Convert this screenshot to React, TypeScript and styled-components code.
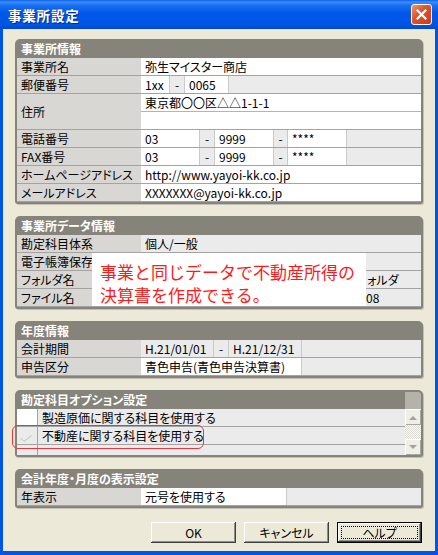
import React from "react";
import styled, { createGlobalStyle } from "styled-components";

const GlobalStyle = createGlobalStyle`
  html, body { margin: 0; padding: 0; background: #fff; }
  body { font-family: "Noto Sans CJK JP", "Liberation Sans", sans-serif; }
  #root { width: 438px; height: 555px; }
`;

const Frame = styled.div`
  width: 438px;
  height: 555px;
  box-sizing: border-box;
  display: flex;
  flex-direction: column;
  background: #0055e5;
  padding-bottom: 4px;
  font-size: 12px;
  color: #000;
`;

const TitleBar = styled.div`
  height: 29px;
  flex: none;
  display: flex;
  align-items: center;
  justify-content: space-between;
  padding: 0 6px 0 8px;
  background: linear-gradient(
    to bottom,
    #0b5fe6 0%,
    #3d8ff8 7%,
    #1a6ff2 18%,
    #0058e8 45%,
    #0055e5 85%,
    #0048cf 100%
  );
`;

const Title = styled.div`
  color: #fff;
  font-weight: bold;
  font-size: 13.5px;
  letter-spacing: 0.8px;
  text-shadow: 1px 1px 0 #0b2a8a;
`;

const CloseButton = styled.div`
  width: 21px;
  height: 21px;
  box-sizing: border-box;
  border: 1px solid #fff;
  border-radius: 3px;
  background: linear-gradient(135deg, #f0957c 0%, #e0542c 40%, #c93c14 100%);
  display: flex;
  align-items: center;
  justify-content: center;
`;

const Client = styled.div`
  flex: 1;
  margin: 0 3px;
  background: #ece9d8;
  padding: 10px 12px 0 12px;
  display: flex;
  flex-direction: column;
  gap: 12px;
  font-feature-settings: "palt";
`;

const Panel = styled.section`
  position: relative;
  background: #86837a;
  border-radius: 5px 5px 3px 3px;
  padding: 0 2px 2px 2px;
  box-shadow: 1px 1px 0 #c2bfb4;
`;

const PanelHeader = styled.div`
  height: 19px;
  line-height: 19px;
  color: #fff;
  font-weight: bold;
  padding-left: 4px;
  white-space: nowrap;
`;

const Row = styled.div<{ $h?: number }>`
  display: flex;
  height: ${(p) => p.$h ?? 18}px;
  box-sizing: border-box;
  border-bottom: 1px solid #a3a3a3;
`;

const Label = styled.div`
  width: 124px;
  flex: none;
  background: #d9d7d4;
  padding-left: 4px;
  box-sizing: border-box;
  display: flex;
  align-items: center;
  white-space: nowrap;
  overflow: hidden;
`;

const Cell = styled.div<{ $w?: number; $tone?: "white" | "gray"; $center?: boolean; $indent?: number }>`
  ${(p) => (p.$w ? `width: ${p.$w}px; flex: none;` : "flex: 1;")}
  box-sizing: border-box;
  background: ${(p) => (p.$tone === "white" ? "#fff" : "#ebebeb")};
  border-right: 1px solid #cacaca;
  padding-left: ${(p) => (p.$center ? 0 : p.$indent ?? 4)}px;
  display: flex;
  align-items: center;
  justify-content: ${(p) => (p.$center ? "center" : "flex-start")};
  white-space: nowrap;
  overflow: hidden;
  &:last-child {
    border-right: none;
  }
`;

const Stack = styled.div`
  flex: 1;
  display: flex;
  flex-direction: column;
`;

const SubLine = styled.div`
  height: 17px;
  background: #fff;
  padding-left: 4px;
  display: flex;
  align-items: center;
  & + & {
    border-top: 1px solid #b4b4b4;
  }
`;

const Callout = styled.div`
  position: absolute;
  left: 77px;
  top: 37px;
  width: 274px;
  height: 53px;
  box-sizing: border-box;
  background: #fff;
  color: #ff1a1a;
  font-size: 17px;
  line-height: 23px;
  padding: 7px 0 0 8px;
  white-space: nowrap;
  font-feature-settings: normal;
`;

const ScrollPanel = styled(Panel)`
  display: grid;
  grid-template-columns: 1fr 16px;
  grid-template-rows: 19px 46px;
`;

const OptionList = styled.div`
  background: #ebebeb;
  overflow: hidden;
`;

const OptionRow = styled.div<{ $h?: number }>`
  display: flex;
  height: ${(p) => p.$h ?? 18}px;
  box-sizing: border-box;
  border-bottom: 1px solid #a3a3a3;
`;

const CheckCell = styled.div<{ $white?: boolean }>`
  width: 21px;
  flex: none;
  box-sizing: border-box;
  border-right: 1px solid #a3a3a3;
  background: ${(p) => (p.$white ? "#fff" : "#ebebeb")};
  display: flex;
  align-items: flex-end;
  padding: 0 0 2px 3px;
`;

const OptionText = styled.div`
  flex: 1;
  padding-left: 4px;
  display: flex;
  align-items: center;
  white-space: nowrap;
`;

const Scrollbar = styled.div`
  grid-row: 1 / 3;
  grid-column: 2;
  display: flex;
  flex-direction: column;
`;

const ScrollCap = styled.div`
  height: 17px;
  margin-top: 2px;
  background: #b5b2aa;
  border-top-right-radius: 3px;
`;

const ScrollButton = styled.div`
  height: 16px;
  box-sizing: border-box;
  background: #efeee7;
  box-shadow: inset 1px 1px #fff, inset -1px -1px #a9a79e;
  display: flex;
  align-items: center;
  justify-content: center;
`;

const ScrollTrack = styled.div`
  flex: 1;
  background: repeating-conic-gradient(#fbfbf8 0 25%, #dcdad2 0 50%) 0 0 / 2px 2px;
`;

const Highlight = styled.div`
  position: absolute;
  left: -3px;
  top: 35px;
  width: 192px;
  height: 24px;
  box-sizing: border-box;
  border: 1px solid #e8383c;
  border-radius: 6px;
`;

const ButtonRow = styled.div`
  display: flex;
  justify-content: flex-end;
  gap: 8px;
  margin-top: 2px;
  padding-right: 1px;
`;

const Button = styled.button<{ $default?: boolean }>`
  position: relative;
  width: 85px;
  height: 21px;
  padding: 0;
  font-family: "Noto Sans CJK JP", "Liberation Sans", sans-serif;
  font-size: 12px;
  font-feature-settings: "palt";
  color: #000;
  background: #ece9d8;
  border: ${(p) => (p.$default ? "1px solid #000" : "none")};
  box-shadow: inset -1px -1px #404040, inset 1px 1px #fff, inset -2px -2px #8f8d85;
  ${(p) =>
    p.$default &&
    `&::after {
      content: "";
      position: absolute;
      inset: 3px;
      border: 1px dotted #000;
    }`}
`;

type Part = { text?: string; w?: number; tone?: "white" | "gray"; center?: boolean; indent?: number };

const Cells = ({ parts }: { parts: Part[] }) => (
  <>
    {parts.map((c, i) => (
      <Cell key={i} $w={c.w} $tone={c.tone} $center={c.center} $indent={c.indent}>
        {c.text}
      </Cell>
    ))}
  </>
);

const phone = (a: string, b: string, c: string): Part[] => [
  { text: a, w: 59, tone: "white" },
  { text: "-", w: 15, center: true },
  { text: b, w: 59, tone: "white" },
  { text: "-", w: 14, center: true },
  { text: c, w: 59, tone: "white" },
  {},
];

const Arrow = ({ up }: { up?: boolean }) => (
  <svg width="8" height="5" viewBox="0 0 8 5">
    <path d={up ? "M0 5 L4 1 L8 5 Z" : "M0 0 L8 0 L4 4 Z"} fill="#a4a29a" />
  </svg>
);

export default function App() {
  return (
    <Frame>
      <GlobalStyle />
      <TitleBar>
        <Title>事業所設定</Title>
        <CloseButton>
          <svg width="11" height="11" viewBox="0 0 11 11">
            <path d="M1.5 1.5 L9.5 9.5 M9.5 1.5 L1.5 9.5" stroke="#fff" strokeWidth="2.2" strokeLinecap="square" />
          </svg>
        </CloseButton>
      </TitleBar>

      <Client>
        <Panel>
          <PanelHeader>事業所情報</PanelHeader>
          <Row>
            <Label>事業所名</Label>
            <Cells parts={[{ text: "弥生マイスター商店", tone: "white" }]} />
          </Row>
          <Row>
            <Label>郵便番号</Label>
            <Cells
              parts={[
                { text: "1xx", w: 29, tone: "white" },
                { text: "-", w: 15, center: true },
                { text: "0065", w: 44, tone: "white" },
                {},
              ]}
            />
          </Row>
          <Row $h={36}>
            <Label>住所</Label>
            <Stack>
              <SubLine>東京都〇〇区△△1-1-1</SubLine>
              <SubLine />
            </Stack>
          </Row>
          <Row>
            <Label>電話番号</Label>
            <Cells parts={phone("03", "9999", "****")} />
          </Row>
          <Row>
            <Label>FAX番号</Label>
            <Cells parts={phone("03", "9999", "****")} />
          </Row>
          <Row>
            <Label>ホームページアドレス</Label>
            <Cells parts={[{ text: "http://www.yayoi-kk.co.jp", tone: "white" }]} />
          </Row>
          <Row>
            <Label>メールアドレス</Label>
            <Cells parts={[{ text: "XXXXXXX@yayoi-kk.co.jp", tone: "white" }]} />
          </Row>
        </Panel>

        <Panel>
          <PanelHeader>事業所データ情報</PanelHeader>
          <Row>
            <Label>勘定科目体系</Label>
            <Cells parts={[{ text: "個人/一般" }]} />
          </Row>
          <Row>
            <Label>電子帳簿保存</Label>
            <Cells parts={[{}]} />
          </Row>
          <Row>
            <Label>フォルダ名</Label>
            <Cells parts={[{ text: "ォルダ", indent: 226 }]} />
          </Row>
          <Row>
            <Label>ファイル名</Label>
            <Cells parts={[{ text: "08", indent: 225 }]} />
          </Row>
          <Callout>
            事業と同じデータで不動産所得の
            <br />
            決算書を作成できる。
          </Callout>
        </Panel>

        <Panel>
          <PanelHeader>年度情報</PanelHeader>
          <Row>
            <Label>会計期間</Label>
            <Cells
              parts={[
                { text: "H.21/01/01", w: 73 },
                { text: "-", w: 15, center: true },
                { text: "H.21/12/31", w: 73 },
                {},
              ]}
            />
          </Row>
          <Row>
            <Label>申告区分</Label>
            <Cells parts={[{ text: "青色申告(青色申告決算書)", w: 161, tone: "white" }, {}]} />
          </Row>
        </Panel>

        <ScrollPanel>
          <PanelHeader>勘定科目オプション設定</PanelHeader>
          <OptionList>
            <OptionRow>
              <CheckCell $white />
              <OptionText>製造原価に関する科目を使用する</OptionText>
            </OptionRow>
            <OptionRow>
              <CheckCell>
                <svg width="12" height="7" viewBox="0 0 12 7">
                  <path d="M0.5 3 L4 6.5 L11.5 0.5" stroke="#bdbdbd" strokeWidth="1" fill="none" />
                </svg>
              </CheckCell>
              <OptionText>不動産に関する科目を使用する</OptionText>
            </OptionRow>
            <OptionRow $h={12}>
              <CheckCell />
              <OptionText />
            </OptionRow>
          </OptionList>
          <Scrollbar>
            <ScrollCap />
            <ScrollButton>
              <Arrow up />
            </ScrollButton>
            <ScrollTrack />
            <ScrollButton>
              <Arrow />
            </ScrollButton>
          </Scrollbar>
          <Highlight />
        </ScrollPanel>

        <Panel>
          <PanelHeader>会計年度・月度の表示設定</PanelHeader>
          <Row>
            <Label>年表示</Label>
            <Cells parts={[{ text: "元号を使用する", w: 146, tone: "white" }, {}]} />
          </Row>
        </Panel>

        <ButtonRow>
          <Button>OK</Button>
          <Button>キャンセル</Button>
          <Button $default>ヘルプ</Button>
        </ButtonRow>
      </Client>
    </Frame>
  );
}
